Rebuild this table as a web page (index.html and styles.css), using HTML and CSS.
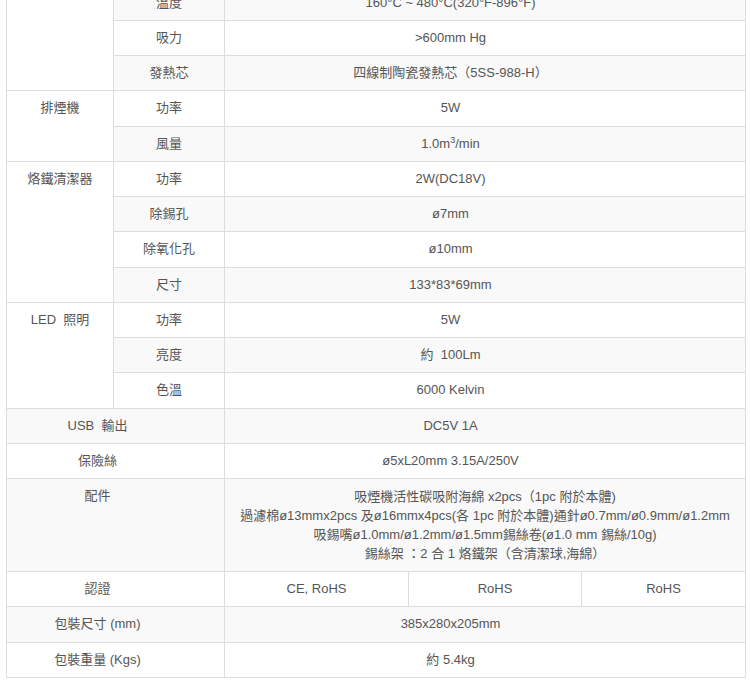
FILE: index.html
```html
<!DOCTYPE html>
<html lang="zh-Hant">
<head>
<meta charset="utf-8">
<title>規格</title>
<link rel="stylesheet" href="styles.css">
</head>
<body>
<table class="spec">
  <colgroup>
    <col class="c1"><col class="c2"><col class="c3"><col class="c4"><col class="c5">
  </colgroup>
  <tbody>
    <tr>
      <td rowspan="3" class="blank"></td>
      <td>溫度</td>
      <td colspan="3" class="val">160°C ~ 480°C(320°F-896°F)</td>
    </tr>
    <tr>
      <td>吸力</td>
      <td colspan="3" class="val">&gt;600mm Hg</td>
    </tr>
    <tr>
      <td>發熱芯</td>
      <td colspan="3" class="val">四線制陶瓷發熱芯（5SS-988-H）</td>
    </tr>
    <tr>
      <td rowspan="2">排煙機</td>
      <td>功率</td>
      <td colspan="3" class="val">5W</td>
    </tr>
    <tr>
      <td>風量</td>
      <td colspan="3" class="val">1.0m<sup>3</sup>/min</td>
    </tr>
    <tr>
      <td rowspan="4">烙鐵清潔器</td>
      <td>功率</td>
      <td colspan="3" class="val">2W(DC18V)</td>
    </tr>
    <tr>
      <td>除錫孔</td>
      <td colspan="3" class="val">ø7mm</td>
    </tr>
    <tr>
      <td>除氧化孔</td>
      <td colspan="3" class="val">ø10mm</td>
    </tr>
    <tr>
      <td>尺寸</td>
      <td colspan="3" class="val">133*83*69mm</td>
    </tr>
    <tr>
      <td rowspan="3">LED&nbsp; 照明</td>
      <td>功率</td>
      <td colspan="3" class="val">5W</td>
    </tr>
    <tr>
      <td>亮度</td>
      <td colspan="3" class="val">約&nbsp; 100Lm</td>
    </tr>
    <tr>
      <td>色溫</td>
      <td colspan="3" class="val">6000 Kelvin</td>
    </tr>
    <tr>
      <td colspan="2" class="label">USB&nbsp; 輸出</td>
      <td colspan="3" class="val">DC5V 1A</td>
    </tr>
    <tr>
      <td colspan="2" class="label">保險絲</td>
      <td colspan="3" class="val">ø5xL20mm 3.15A/250V</td>
    </tr>
    <tr>
      <td colspan="2" class="label">配件</td>
      <td colspan="3" class="multi">
        <div class="line">吸煙機活性碳吸附海綿 x2pcs（1pc 附於本體)</div>
        <div class="line">過濾棉ø13mmx2pcs 及ø16mmx4pcs(各 1pc 附於本體)通針ø0.7mm/ø0.9mm/ø1.2mm</div>
        <div class="line">吸錫嘴ø1.0mm/ø1.2mm/ø1.5mm錫絲卷(ø1.0 mm 錫絲/10g)</div>
        <div class="line">錫絲架 ：2 合 1 烙鐵架（含清潔球,海綿）</div>
      </td>
    </tr>
    <tr>
      <td colspan="2" class="label">認證</td>
      <td>CE, RoHS</td>
      <td>RoHS</td>
      <td>RoHS</td>
    </tr>
    <tr>
      <td colspan="2" class="label">包裝尺寸 (mm)</td>
      <td colspan="3" class="val">385x280x205mm</td>
    </tr>
    <tr>
      <td colspan="2" class="label">包裝重量 (Kgs)</td>
      <td colspan="3" class="val">約 5.4kg</td>
    </tr>
  </tbody>
</table>
</body>
</html>
```

FILE: styles.css
```css
html, body {
  margin: 0;
  padding: 0;
  background: #fff;
}

body {
  font-family: "Liberation Sans", Arial, "Noto Sans CJK TC", sans-serif;
  font-size: 13px;
  color: #555;
}

.spec {
  border-collapse: collapse;
  table-layout: fixed;
  width: 739px;
  margin: -15.5px 0 0 6px;
  border: 1px solid #ddd;
}

.c1 { width: 107px; }
.c2 { width: 111px; }
.c3 { width: 184px; }
.c4 { width: 173px; }
.c5 { width: 164px; }

.spec td {
  border: 1px solid #ddd;
  padding: 8px;
  line-height: 18.25px;
  text-align: center;
  vertical-align: top;
  white-space: nowrap;
}

.spec tr:nth-child(odd) {
  background: #f9f9f9;
}

.spec td.blank {
  background: #fff;
}

.spec td.label {
  padding-right: 44px;
}

.spec td.val {
  padding-right: 77px;
}

.spec td.multi {
  padding-left: 4px;
  padding-right: 4px;
}

.line {
  line-height: 19px;
}

.spec sup {
  font-size: 9px;
  line-height: 0;
  vertical-align: 5px;
}
```
